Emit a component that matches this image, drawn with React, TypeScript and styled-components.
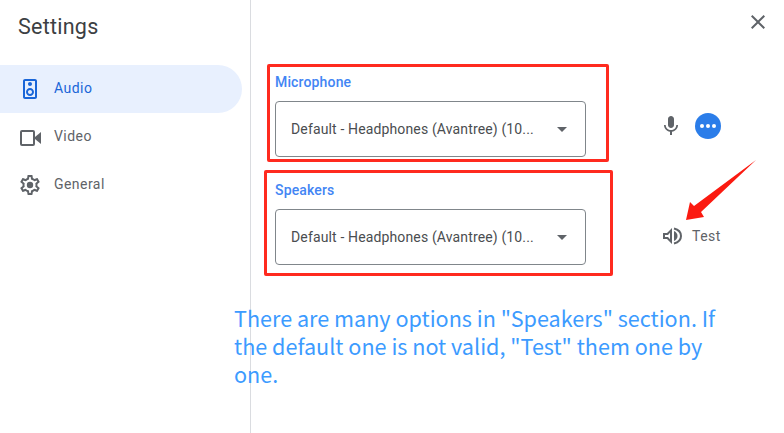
import React from "react";
import styled, { createGlobalStyle } from "styled-components";
import { MdClose, MdMic } from "react-icons/md";

const Global = createGlobalStyle`
  html, body { margin: 0; padding: 0; background: #fff; }
  body { width: 784px; height: 433px; overflow: hidden; font-family: Roboto, "Liberation Sans", sans-serif; }
`;

const Page = styled.div`
  position: relative;
  display: flex;
  width: 784px;
  height: 433px;
  overflow: hidden;
`;

const Sidebar = styled.nav`
  flex: none;
  box-sizing: content-box;
  width: 242px;
  padding-right: 8px;
  border-right: 1px solid #dadce0;
`;

const Title = styled.h1`
  margin: 0;
  height: 65px;
  padding: 13px 0 0 18px;
  box-sizing: border-box;
  font: 400 21.5px/28px Roboto, sans-serif;
  letter-spacing: 0.25px;
  color: #3c4043;
`;

const NavItem = styled.div<{ $active?: boolean }>`
  display: flex;
  align-items: center;
  height: 48px;
  padding-left: 18px;
  gap: 12px;
  border-radius: 0 24px 24px 0;
  background: ${(p) => (p.$active ? "#e8f0fe" : "transparent")};
  color: ${(p) => (p.$active ? "#1a66d8" : "#5f6368")};
  font: 400 14px/20px Roboto, sans-serif;
  letter-spacing: 0.45px;
  svg { flex: none; width: 24px; height: 24px; fill: currentColor; }
`;

const NavText = styled.span`
  margin-top: -2px;
`;

const Main = styled.main`
  flex: 1;
  padding: 72px 0 0 24px;
`;

const Row = styled.section`
  display: flex;
  height: 108px;
`;

const Field = styled.div`
  width: 311px;
`;

const Label = styled.div`
  height: 29px;
  font: 500 14px/20px Roboto, sans-serif;
  letter-spacing: 0.15px;
  color: #4285f4;
`;

const Select = styled.div`
  display: flex;
  align-items: center;
  justify-content: space-between;
  box-sizing: border-box;
  height: 56px;
  padding: 0 18px 0 15px;
  border: 1px solid #80868b;
  border-radius: 4px;
  font: 400 14px/20px Roboto, sans-serif;
  letter-spacing: 0.14px;
  color: #4a4d50;
`;

const Caret = styled.span`
  width: 0;
  height: 0;
  border-left: 5.5px solid transparent;
  border-right: 5.5px solid transparent;
  border-top: 5px solid #5f6368;
`;

const Controls = styled.div<{ $gap: number; $left: number; $top: number }>`
  display: flex;
  align-items: center;
  gap: ${(p) => p.$gap}px;
  height: 56px;
  margin-top: ${(p) => p.$top}px;
  margin-left: ${(p) => p.$left}px;
  color: #5f6368;
  font: 400 14px/20px Roboto, sans-serif;
  letter-spacing: 0.5px;
  svg { flex: none; }
`;

const DotsButton = styled.span`
  display: flex;
  align-items: center;
  justify-content: center;
  gap: 2px;
  width: 26px;
  height: 26px;
  border-radius: 50%;
  background: #2b7de9;
`;

const Dot = styled.i`
  width: 4px;
  height: 4px;
  border-radius: 50%;
  background: #fff;
`;

const CloseButton = styled.span`
  position: absolute;
  left: 746px;
  top: 10px;
  width: 24px;
  height: 24px;
  color: #5f6368;
  svg { display: block; }
`;

const RedBox = styled.div<{ $x: number; $y: number; $w: number; $h: number }>`
  position: absolute;
  left: ${(p) => p.$x}px;
  top: ${(p) => p.$y}px;
  width: ${(p) => p.$w}px;
  height: ${(p) => p.$h}px;
  box-sizing: border-box;
  border: 3px solid #ff2a1f;
  border-radius: 2px;
`;

const Arrow = styled.svg`
  position: absolute;
  left: 680px;
  top: 155px;
`;

const Note = styled.p`
  position: absolute;
  left: 234px;
  top: 304px;
  width: 500px;
  margin: 0;
  font: 400 21.6px/28px "Noto Sans CJK SC", "Noto Sans", sans-serif;
  color: #3c9bff;
`;

export default function App() {
  return (
    <Page>
      <Global />
      <Sidebar>
        <Title>Settings</Title>
        <NavItem $active>
          <svg viewBox="0 0 24 24"><path d="M17 2H7c-1.1 0-2 .9-2 2v16c0 1.1.9 1.99 2 1.99L17 22c1.1 0 2-.9 2-2V4c0-1.1-.9-2-2-2zM7 20V4h10v16H7zm5-11c1.1 0 2-.9 2-2s-.9-2-2-2c-1.11 0-2 .9-2 2s.89 2 2 2zm0 2c-2.21 0-4 1.79-4 4s1.79 4 4 4 4-1.79 4-4-1.79-4-4-4zm0 6c-1.1 0-2-.9-2-2s.9-2 2-2 2 .9 2 2-.9 2-2 2z" /></svg>
          <NavText>Audio</NavText>
        </NavItem>
        <NavItem>
          <svg viewBox="0 0 24 24">
            <rect x="3" y="6" width="13" height="14" rx="1" fill="none" stroke="currentColor" strokeWidth="2" />
            <polygon points="17,12 23,7 23,19 17,14" />
          </svg>
          <NavText>Video</NavText>
        </NavItem>
        <NavItem>
          <svg viewBox="0 0 24 24">
            <path d="M19.43 12.98c.04-.32.07-.64.07-.98 0-.34-.03-.66-.07-.98l2.11-1.65c.19-.15.24-.42.12-.64l-2-3.46c-.09-.16-.26-.25-.44-.25-.06 0-.12.01-.17.03l-2.49 1c-.52-.4-1.08-.73-1.69-.98l-.38-2.65C14.46 2.18 14.25 2 14 2h-4c-.25 0-.46.18-.49.42l-.38 2.65c-.61.25-1.17.59-1.69.98l-2.49-1c-.06-.02-.12-.03-.18-.03-.17 0-.34.09-.43.25l-2 3.46c-.13.22-.07.49.12.64l2.11 1.65c-.04.32-.07.65-.07.98 0 .33.03.66.07.98l-2.11 1.65c-.19.15-.24.42-.12.64l2 3.46c.09.16.26.25.44.25.06 0 .12-.01.17-.03l2.49-1c.52.4 1.08.73 1.69.98l.38 2.65c.03.24.24.42.49.42h4c.25 0 .46-.18.49-.42l.38-2.65c.61-.25 1.17-.59 1.69-.98l2.49 1c.06.02.12.03.18.03.17 0 .34-.09.43-.25l2-3.46c.12-.22.07-.49-.12-.64l-2.11-1.65zm-1.98-1.71c.04.31.05.52.05.73 0 .21-.02.43-.05.73l-.14 1.13.89.7 1.08.84-.7 1.21-1.27-.51-1.04-.42-.9.68c-.43.32-.84.56-1.25.73l-1.06.43-.16 1.13-.2 1.35h-1.4l-.19-1.35-.16-1.13-1.06-.43c-.43-.18-.83-.41-1.23-.71l-.91-.7-1.06.43-1.27.51-.7-1.21 1.08-.84.89-.7-.14-1.13c-.03-.31-.05-.54-.05-.74s.02-.43.05-.73l.14-1.13-.89-.7-1.08-.84.7-1.21 1.27.51 1.04.42.9-.68c.43-.32.84-.56 1.25-.73l1.06-.43.16-1.13.2-1.35h1.39l.19 1.35.16 1.13 1.06.43c.43.18.83.41 1.23.71l.91.7 1.06-.43 1.27-.51.7 1.21-1.07.85-.89.7.14 1.13z" />
            <circle cx="12" cy="12" r="3.2" />
          </svg>
          <NavText>General</NavText>
        </NavItem>
      </Sidebar>
      <Main>
        <Row>
          <Field>
            <Label>Microphone</Label>
            <Select>Default - Headphones (Avantree) (10...<Caret /></Select>
          </Field>
          <Controls $gap={12} $left={73} $top={26}>
            <MdMic size={24} />
            <DotsButton><Dot /><Dot /><Dot /></DotsButton>
          </Controls>
        </Row>
        <Row>
          <Field>
            <Label>Speakers</Label>
            <Select>Default - Headphones (Avantree) (10...<Caret /></Select>
          </Field>
          <Controls $gap={9} $left={77} $top={28}>
            <svg width="20" height="18" viewBox="0 0 20 18" fill="#5f6368">
              <path d="M0 6v6h4l5 5V1L4 6H0zm7-.2v6.4L5 10H2V8h3l2-2.200z" />
              <path d="M11 4c2 .8 3.500 2.700 3.500 5s-1.500 4.200-3.500 5z" />
              <path d="M11 1.500c4 1 7 3.700 7 7.500s-3 6.500-7 7.500" fill="none" stroke="#5f6368" strokeWidth="2" />
            </svg>
            Test
          </Controls>
        </Row>
      </Main>
      <CloseButton><MdClose size={24} /></CloseButton>
      <RedBox $x={267} $y={64} $w={342} $h={98} />
      <RedBox $x={264} $y={170} $w={349} $h={106} />
      <Arrow width="80" height="70" viewBox="680 155 80 70">
        <polygon fill="#fb1a10" points="756,160 701,212 704,217 686,220 690,202 694,206" />
      </Arrow>
      <Note>There are many options in "Speakers" section. If the default one is not valid, "Test" them one by one.</Note>
    </Page>
  );
}
